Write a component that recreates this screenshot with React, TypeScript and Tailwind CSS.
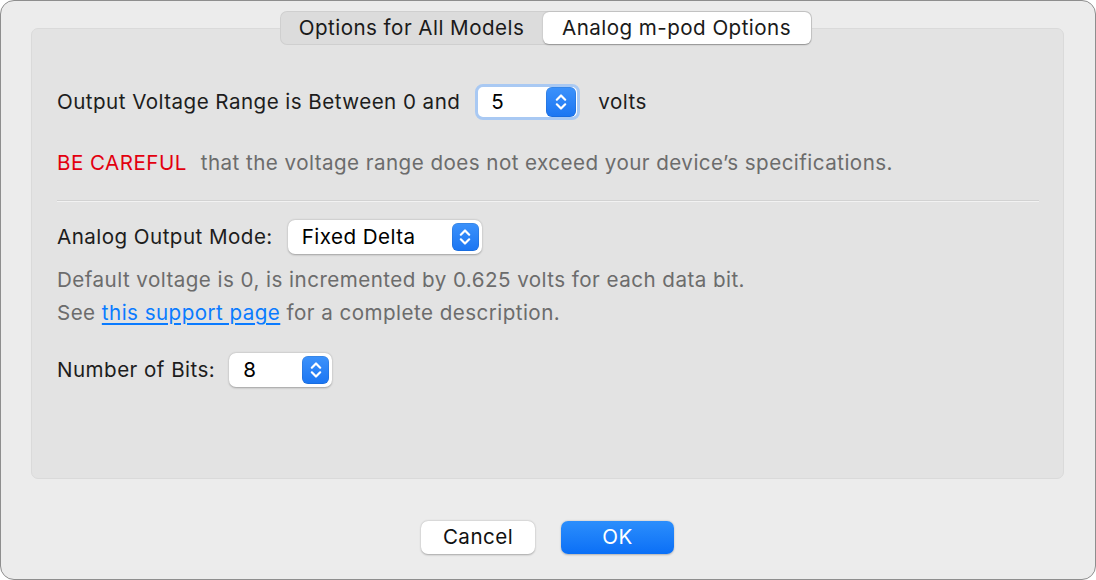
import React from "react";

function Chevrons({ className = "" }: { className?: string }) {
  return (
    <svg viewBox="0 0 28 28" className={className} fill="none" stroke="white" strokeWidth="2.4" strokeLinecap="round" strokeLinejoin="round">
      <path d="M9.5 11.5 L14 7 L18.5 11.5" />
      <path d="M9.5 16.5 L14 21 L18.5 16.5" />
    </svg>
  );
}

function StepButton({ w, h }: { w: string; h: string }) {
  return (
    <div className={`${w} ${h} rounded-[6px] bg-gradient-to-b from-[#3c92fb] to-[#1a75f2] flex items-center justify-center shadow-[inset_0_0_0_0.5px_rgba(0,0,0,0.15)]`}>
      <Chevrons className="w-[26px] h-[26px]" />
    </div>
  );
}

export default function App() {
  const font = { fontFamily: 'Inter, "Liberation Sans", Arial, sans-serif' };
  return (
    <div className="w-[1096px] h-[580px] bg-white" style={font}>
      <div className="w-[1096px] h-[580px] rounded-[14px] border border-[#8e8e8e] bg-[#ececec] flex flex-col overflow-hidden tracking-[0.45px]">
        {/* tabs */}
        <div className="flex justify-center pt-[10px] relative z-10">
          <div className="flex h-[34px] rounded-[7px] bg-[#dcdcdc] shadow-[inset_0_0_0_1px_rgba(0,0,0,0.06)] p-[1px] ml-[-5px]">
            <div className="w-[262px] flex items-center justify-center text-[20.6px] text-[#1a1a1a]">Options for All Models</div>
            <div className="w-[268px] flex items-center justify-center text-[20.6px] text-[#1a1a1a] bg-white rounded-[6px] shadow-[0_0.5px_1.5px_rgba(0,0,0,0.3)]">Analog m-pod Options</div>
          </div>
        </div>
        {/* box */}
        <div className="mx-[30px] mr-[31px] mt-[-17px] h-[451px] rounded-[7px] bg-[#e3e3e3] border border-[#dadada] pl-[25px] pr-[24px] pt-[55px] text-[20.6px] text-[#1d1d1d]">
          <div className="flex items-center h-[36px]">
            <span>Output Voltage Range is Between 0 and</span>
            <div className="ml-[15px] w-[105px] h-[36px] rounded-[8px] bg-white border-[3px] border-[#a9c9f3] flex items-center justify-between pl-[13px] pr-[1px]">
              <span className="text-[#000]">5</span>
              <StepButton w="w-[30px]" h="h-[30px]" />
            </div>
            <span className="ml-[18px]">volts</span>
          </div>
          <div className="flex items-center h-[30px] mt-[28px]">
            <span className="text-[#e3000f]">BE CAREFUL</span>
            <span className="ml-[14px] text-[#6c6c6c]">that the voltage range does not exceed your device’s specifications.</span>
          </div>
          <div className="mt-[22px] h-[1px] bg-[#d2d2d2] border-b border-[#f2f2f2] box-content" />
          <div className="flex items-center h-[34px] mt-[18px]">
            <span>Analog Output Mode:</span>
            <div className="ml-[15px] w-[194px] h-[34px] rounded-[7px] bg-white shadow-[0_0.5px_2px_rgba(0,0,0,0.3)] flex items-center justify-between pl-[14px] pr-[3px]">
              <span className="text-[#000]">Fixed Delta</span>
              <StepButton w="w-[27px]" h="h-[28px]" />
            </div>
          </div>
          <div className="mt-[9px] text-[#6c6c6c] leading-[33px]">
            <div>Default voltage is 0, is incremented by 0.625 volts for each data bit.</div>
            <div>
              See <span className="text-[#0a7bff] underline underline-offset-[3px]">this support page</span> for a complete description.
            </div>
          </div>
          <div className="flex items-center h-[34px] mt-[24px]">
            <span>Number of Bits:</span>
            <div className="ml-[14px] w-[103px] h-[34px] rounded-[7px] bg-white shadow-[0_0.5px_2px_rgba(0,0,0,0.3)] flex items-center justify-between pl-[14px] pr-[3px]">
              <span className="text-[#000]">8</span>
              <StepButton w="w-[27px]" h="h-[28px]" />
            </div>
          </div>
        </div>
        {/* buttons */}
        <div className="flex justify-center gap-[26px] mt-[42px] ml-[-1px]">
          <div className="w-[114px] h-[33px] rounded-[7px] bg-white shadow-[0_0.5px_2px_rgba(0,0,0,0.3)] flex items-center justify-center text-[20.6px] text-[#111]">Cancel</div>
          <div className="w-[113px] h-[33px] rounded-[7px] bg-gradient-to-b from-[#2b8efc] to-[#0a6ff6] shadow-[0_0.5px_2px_rgba(0,0,0,0.25)] flex items-center justify-center text-[20.6px] text-white">OK</div>
        </div>
      </div>
    </div>
  );
}
